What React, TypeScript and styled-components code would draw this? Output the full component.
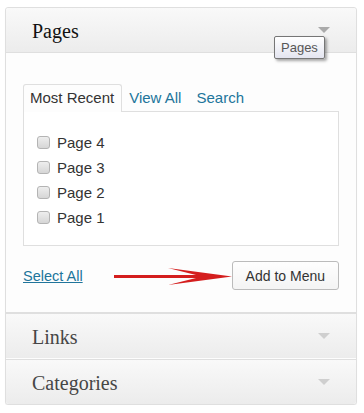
import styled, { createGlobalStyle } from 'styled-components';

const GlobalStyle = createGlobalStyle`
  html, body {
    margin: 0;
    padding: 0;
    background: #ffffff;
  }
  body {
    font-family: "Liberation Sans", Arial, sans-serif;
  }
`;

const pages = ['Page 4', 'Page 3', 'Page 2', 'Page 1'];

function Arrow() {
  return (
    <StArrow width="118" height="28" viewBox="0 0 118 28">
      <rect x="0" y="13" width="90" height="3" fill="#d41e1e" />
      <polygon points="54,6 118,14.5 54,23 88,14.5" fill="#d41e1e" />
    </StArrow>
  );
}

function App() {
  return (
    <>
      <GlobalStyle />
      <StWrap>
        <StAccordion>
          <StHeader $first>
            <StTitle $open>Pages</StTitle>
            <StToggle $open />
            <StTooltip>Pages</StTooltip>
          </StHeader>
          <StBody>
            <StTabs>
              <StTab $active>Most Recent</StTab>
              <StTab>View All</StTab>
              <StTab>Search</StTab>
            </StTabs>
            <StTabPanel>
              {pages.map((p) => (
                <StItem key={p}>
                  <StCheck type="checkbox" />
                  {p}
                </StItem>
              ))}
            </StTabPanel>
            <StActions>
              <StSelectAll href="#">Select All</StSelectAll>
              <Arrow />
              <StButton>Add to Menu</StButton>
            </StActions>
          </StBody>
          <StHeader>
            <StTitle>Links</StTitle>
            <StToggle />
          </StHeader>
          <StHeader $last>
            <StTitle>Categories</StTitle>
            <StToggle />
          </StHeader>
        </StAccordion>
      </StWrap>
    </>
  );
}

export default App;

const StWrap = styled.div`
  padding: 7px 0 0 5px;
`;

const StAccordion = styled.div`
  width: 350px;
  border: 1px solid #dfdfdf;
  border-radius: 3px;
  background: #fdfdfd;
  box-shadow: 0 1px 1px rgba(0, 0, 0, 0.04);
`;

const StHeader = styled.div<{ $first?: boolean; $last?: boolean }>`
  position: relative;
  display: flex;
  align-items: center;
  justify-content: space-between;
  height: 44px;
  padding: 0 26px 0 26px;
  background: linear-gradient(to bottom, #f9f9f9, #ececec);
  border-top: ${(p) => (p.$first ? 'none' : '1px solid #dfdfdf')};
  border-bottom: ${(p) => (p.$first ? '1px solid #dfdfdf' : 'none')};
  border-radius: ${(p) => (p.$first ? '3px 3px 0 0' : p.$last ? '0 0 3px 3px' : '0')};
  ${(p) => (p.$last ? 'margin-top: 1px;' : '')}
`;

const StTitle = styled.h3<{ $open?: boolean }>`
  margin: 2px 0 0 0;
  font-family: "Liberation Serif", Georgia, serif;
  font-size: 20px;
  font-weight: normal;
  color: ${(p) => (p.$open ? '#111111' : '#464646')};
`;

const StToggle = styled.span<{ $open?: boolean }>`
  width: 0;
  height: 0;
  border-left: 6px solid transparent;
  border-right: 6px solid transparent;
  border-top: 6px solid ${(p) => (p.$open ? '#aaaaaa' : '#cfcfcf')};
`;

const StTooltip = styled.div`
  position: absolute;
  left: 268px;
  top: 28px;
  padding: 3px 6px 3px;
  font-size: 13px;
  line-height: 15px;
  color: #575757;
  background: linear-gradient(to bottom, #ffffff, #e4e5f0);
  border: 1px solid #767676;
  border-radius: 2px;
  box-shadow: 2px 2px 3px rgba(0, 0, 0, 0.35);
  z-index: 2;
`;

const StBody = styled.div`
  padding: 31px 17px 22px 17px;
  border-bottom: 1px solid #dfdfdf;
`;

const StTabs = styled.div`
  display: flex;
  align-items: flex-end;
`;

const StTab = styled.span<{ $active?: boolean }>`
  height: 27px;
  line-height: 26px;
  padding: 0 7px 0 6px;
  font-size: 15px;
  color: ${(p) => (p.$active ? '#333333' : '#21759b')};
  background: ${(p) => (p.$active ? '#fdfdfd' : 'transparent')};
  border: 1px solid ${(p) => (p.$active ? '#dfdfdf' : 'transparent')};
  border-bottom: none;
  border-radius: 3px 3px 0 0;
  margin-bottom: -1px;
  position: relative;
`;

const StTabPanel = styled.div`
  display: flex;
  flex-direction: column;
  gap: 6px;
  height: 112px;
  padding: 21px 13px 0 13px;
  background: #ffffff;
  border: 1px solid #dfdfdf;
`;

const StItem = styled.label`
  display: flex;
  align-items: center;
  gap: 7px;
  height: 19px;
  font-size: 15px;
  color: #333333;
`;

const StCheck = styled.input`
  appearance: none;
  margin: 0;
  width: 13px;
  height: 13px;
  border: 1px solid #b4b4b4;
  border-radius: 3px;
  background: linear-gradient(to bottom, #eeeeee, #d6d6d6);
`;

const StActions = styled.div`
  display: flex;
  align-items: center;
  margin-top: 15px;
`;

const StSelectAll = styled.a`
  font-size: 14.5px;
  color: #21759b;
  text-decoration: underline;
  margin-top: 1px;
`;

const StArrow = styled.svg`
  display: block;
  margin-left: auto;
`;

const StButton = styled.button`
  height: 29px;
  padding: 0 13px;
  font-family: "Liberation Sans", Arial, sans-serif;
  font-size: 14px;
  color: #333333;
  background: linear-gradient(to bottom, #fefefe, #f4f4f4);
  border: 1px solid #bbbbbb;
  border-radius: 3px;
`;
